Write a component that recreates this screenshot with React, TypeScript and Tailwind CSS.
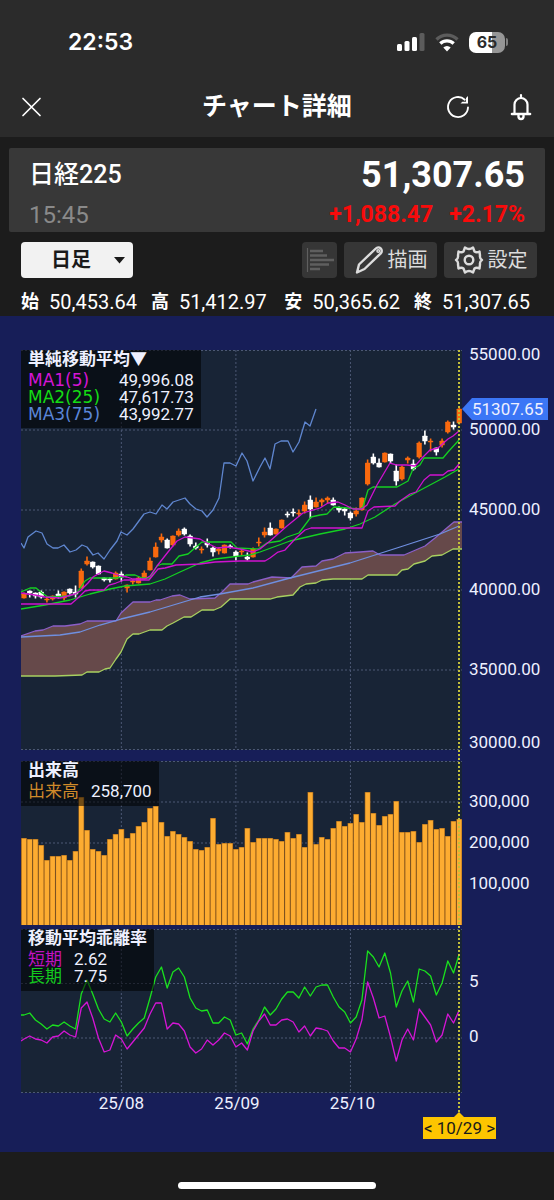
import { useState } from 'react'
import type { ReactNode } from 'react'

type Candle = [dir: 'u' | 'd', high: number, top: number, bottom: number, low: number]
type Point = [number, number]

// The chart canvas spans x 21..462, one trading day every 5.727 units
const dayX = (i: number) => 24 + i * 5.727
const MONTH_LINES = [17, 37, 57].map(dayX)

const CANDLES: Candle[] = [
  ['u', 593, 594, 598, 598], ['d', 591, 591, 593, 597], ['d', 593, 593, 596, 598], ['d', 591, 592, 597, 598],
  ['u', 597, 599, 600, 602], ['u', 596, 596, 599, 600], ['d', 591, 594, 596, 598], ['u', 592, 592, 598, 600],
  ['d', 589, 589, 593, 594], ['d', 586, 592, 594, 597], ['u', 569, 571, 588, 588], ['u', 557, 561, 564, 565],
  ['d', 562, 562, 567, 568], ['d', 566, 566, 574, 574], ['d', 578, 578, 580, 581], ['d', 578, 579, 580, 582],
  ['u', 572, 573, 579, 579], ['d', 572, 574, 577, 581], ['u', 585, 585, 588, 592], ['u', 580, 581, 582, 584],
  ['u', 577, 578, 583, 583], ['u', 571, 573, 579, 579], ['u', 558, 561, 570, 570], ['u', 543, 547, 557, 557],
  ['u', 534, 537, 540, 542], ['d', 539, 540, 548, 548], ['u', 536, 536, 545, 546], ['u', 529, 531, 535, 536],
  ['d', 528, 529, 534, 535], ['d', 535, 536, 544, 546], ['d', 543, 546, 548, 549], ['u', 547, 549, 550, 553],
  ['d', 539, 543, 545, 547], ['d', 547, 548, 552, 556], ['u', 548, 549, 551, 554], ['u', 545, 545, 553, 553],
  ['d', 545, 546, 547, 548], ['d', 551, 552, 556, 560], ['u', 550, 551, 552, 555], ['d', 553, 557, 559, 560],
  ['u', 548, 549, 557, 557], ['u', 538, 542, 543, 546], ['u', 528, 532, 535, 537], ['d', 523, 528, 535, 535],
  ['u', 529, 529, 534, 534], ['u', 520, 520, 528, 528], ['d', 512, 514, 515, 517], ['d', 509, 512, 513, 516],
  ['u', 510, 513, 514, 516], ['u', 502, 505, 511, 513], ['d', 496, 500, 509, 518], ['u', 498, 502, 507, 507],
  ['u', 499, 500, 502, 506], ['u', 497, 498, 500, 503], ['d', 498, 500, 505, 505], ['d', 507, 508, 510, 512],
  ['d', 508, 509, 511, 515], ['d', 512, 513, 518, 520], ['u', 508, 511, 514, 516], ['u', 498, 498, 510, 510],
  ['u', 460, 463, 484, 485], ['d', 454, 457, 463, 464], ['d', 459, 463, 467, 467], ['u', 453, 453, 462, 462],
  ['d', 454, 454, 461, 463], ['d', 465, 471, 481, 485], ['u', 466, 467, 479, 480], ['u', 457, 458, 460, 463],
  ['d', 460, 464, 469, 470], ['u', 442, 443, 457, 458], ['d', 431, 436, 441, 444], ['u', 439, 441, 442, 451],
  ['d', 448, 448, 452, 455], ['u', 439, 441, 445, 447], ['u', 421, 422, 432, 433], ['d', 422, 425, 427, 429],
  ['u', 408, 409, 423, 424],
]

const MA5: Point[] = [
  [21, 593], [35, 595], [45, 597], [60, 598], [75, 594], [80, 591], [88, 583], [93, 577], [98, 574], [104, 571],
  [112, 573], [121, 576], [127, 577], [133, 579], [145, 579], [150, 576], [157, 566], [168, 552], [177, 541],
  [185, 537], [193, 538], [200, 539], [207, 543], [217, 548], [228, 547], [240, 549], [253, 552], [260, 549],
  [270, 541], [287, 526], [303, 513], [320, 508], [328, 503], [338, 502], [345, 505], [353, 509], [362, 509],
  [367, 505], [377, 485], [390, 463], [397, 465], [407, 465], [415, 466], [423, 457], [430, 450], [438, 448],
  [448, 439], [453, 436], [459, 431],
]

const MA25: Point[] = [
  [21, 609], [45, 605], [70, 600], [90, 594], [110, 589], [125, 586], [150, 584], [165, 579], [180, 572],
  [200, 563], [215, 559], [240, 556], [250, 555], [260, 552], [290, 541], [320, 534], [345, 529], [360, 524],
  [375, 517], [395, 504], [415, 493], [430, 485], [445, 477], [459, 469],
]

const MA75: Point[] = [
  [21, 637], [60, 635], [80, 632], [100, 625], [121, 619], [150, 612], [180, 603], [200, 597], [220, 594],
  [253, 588], [290, 578], [350, 563], [400, 547], [440, 534], [459, 526],
]

const TENKAN: Point[] = [
  [21, 592], [30, 588], [36, 588], [42, 593], [48, 597], [70, 596], [77, 593], [85, 581], [90, 578], [116, 578],
  [122, 577], [126, 575], [135, 575], [142, 578], [150, 578], [157, 566], [162, 564], [172, 564], [179, 556],
  [188, 554], [196, 547], [202, 542], [231, 542], [237, 548], [258, 549], [267, 543], [280, 541], [287, 537],
  [299, 533], [311, 517], [320, 515], [327, 514], [334, 507], [360, 509], [363, 507], [368, 490], [373, 487],
  [397, 487], [408, 481], [413, 469], [420, 465], [424, 458], [443, 458], [448, 452], [459, 440],
]

const KIJUN: Point[] = [
  [21, 604], [71, 604], [78, 598], [85, 591], [90, 590], [104, 590], [109, 585], [116, 583], [124, 580],
  [149, 580], [158, 569], [165, 568], [176, 565], [200, 564], [215, 562], [240, 561], [265, 561], [270, 558],
  [278, 552], [285, 550], [296, 538], [305, 530], [311, 528], [362, 528], [368, 511], [374, 507], [395, 506],
  [400, 501], [410, 494], [416, 492], [424, 480], [430, 475], [443, 475], [448, 471], [454, 470], [459, 464],
]

const CHIKOU: Point[] = [
  [21, 543], [24, 548], [28, 537], [36, 531], [42, 533], [47, 544], [53, 548], [58, 548], [64, 545], [70, 552],
  [76, 550], [82, 545], [87, 547], [93, 555], [98, 553], [104, 559], [110, 550], [117, 541], [121, 532],
  [127, 535], [133, 529], [144, 514], [150, 512], [156, 514], [162, 505], [167, 509], [173, 502], [185, 498],
  [190, 504], [196, 509], [202, 511], [207, 517], [213, 510], [219, 498], [224, 463], [230, 463], [236, 466],
  [242, 453], [247, 461], [253, 481], [260, 467], [265, 458], [270, 469], [275, 444], [281, 441], [288, 441],
  [293, 452], [299, 442], [305, 422], [310, 426], [316, 409],
]

const SPAN_A: Point[] = [
  [21, 636], [35, 631], [43, 630], [53, 626], [65, 626], [80, 624], [87, 621], [116, 621], [121, 613],
  [133, 602], [150, 602], [156, 600], [160, 600], [172, 596], [180, 595], [190, 599], [215, 598], [222, 592],
  [230, 584], [248, 584], [253, 582], [272, 577], [291, 578], [302, 567], [316, 566], [322, 561], [333, 559],
  [345, 553], [360, 552], [373, 551], [380, 555], [404, 555], [425, 546], [435, 538], [448, 527], [454, 522],
  [462, 522],
]

const SPAN_B: Point[] = [
  [21, 676], [55, 676], [82, 675], [87, 672], [99, 672], [105, 669], [110, 668], [116, 659], [121, 652],
  [127, 639], [133, 634], [139, 634], [150, 630], [162, 630], [167, 626], [173, 623], [184, 617], [191, 617],
  [202, 610], [214, 610], [221, 607], [230, 599], [270, 599], [277, 597], [293, 595], [300, 587], [306, 584],
  [316, 583], [322, 580], [333, 579], [362, 579], [368, 575], [397, 575], [402, 570], [408, 569], [414, 564],
  [425, 561], [432, 556], [442, 555], [453, 549], [462, 549],
]

// Top edge of each volume bar, the base sits at 925
const VOLUME_TOPS = [
  838, 839, 839, 845, 860, 856, 856, 855, 860, 851, 797, 830, 849, 851, 855, 839, 834, 829, 838, 833, 826, 822,
  808, 806, 822, 836, 831, 834, 837, 841, 849, 850, 847, 818, 844, 843, 843, 849, 847, 828, 842, 838, 838, 838,
  839, 841, 832, 838, 834, 847, 792, 844, 837, 839, 828, 821, 826, 823, 814, 822, 792, 813, 825, 816, 814, 801,
  832, 832, 831, 842, 824, 820, 829, 828, 836, 821, 819,
]

const LONG_DEV = [
  1015, 1013, 1020, 1024, 1029, 1025, 1026, 1022, 1026, 1029, 994, 980, 994, 1009, 1019, 1022, 1013, 1022, 1036,
  1029, 1023, 1018, 998, 977, 967, 988, 972, 968, 977, 998, 1008, 1011, 1010, 1023, 1023, 1017, 1020, 1035, 1033,
  1044, 1029, 1020, 1007, 1015, 1009, 999, 992, 992, 998, 987, 996, 987, 985, 985, 997, 1007, 1012, 1023, 1017,
  1000, 951, 957, 967, 953, 973, 1007, 991, 981, 1002, 969, 971, 976, 995, 983, 961, 973, 954,
]

const SHORT_DEV = [
  1039, 1036, 1039, 1040, 1043, 1037, 1036, 1031, 1035, 1037, 1008, 1002, 1018, 1038, 1052, 1050, 1035, 1039,
  1049, 1042, 1035, 1028, 1014, 1003, 1003, 1029, 1023, 1024, 1031, 1047, 1053, 1049, 1040, 1045, 1040, 1033,
  1036, 1047, 1043, 1050, 1031, 1021, 1014, 1025, 1025, 1020, 1019, 1022, 1032, 1026, 1036, 1028, 1029, 1031,
  1041, 1048, 1048, 1052, 1039, 1020, 982, 998, 1018, 1016, 1037, 1061, 1040, 1029, 1040, 1009, 1017, 1025, 1042,
  1035, 1014, 1023, 1010,
]

const toPoints = (pts: Point[]) => pts.map((p) => p.join(',')).join(' ')
const seriesPoints = (ys: number[]) => ys.map((y, i) => `${dayX(i)},${y}`).join(' ')

function Line({ points, color }: { points: string; color: string }) {
  return (
    <polyline
      points={points}
      fill="none"
      stroke={color}
      strokeWidth="1.3"
      strokeLinejoin="round"
      vectorEffect="non-scaling-stroke"
    />
  )
}

interface PlotProps {
  top: number
  height: number
  gridY: number[]
  label: string
  className: string
  children: ReactNode
}

function Plot({ top, height, gridY, label, className, children }: PlotProps) {
  return (
    <svg
      viewBox={`21 ${top} 441 ${height}`}
      preserveAspectRatio="none"
      role="img"
      aria-label={label}
      className={`block w-full bg-[#182436] ${className}`}
    >
      <g stroke="#4c5874" strokeWidth="1" strokeDasharray="2 2">
        {gridY.map((y) => (
          <line key={y} x1="21" x2="462" y1={y} y2={y} />
        ))}
        {MONTH_LINES.map((x) => (
          <line key={x} x1={x} x2={x} y1={top} y2={top + height} />
        ))}
      </g>
      {children}
    </svg>
  )
}

function StatusBar() {
  return (
    <div className="flex h-[84px] items-center justify-between pl-[68px] pr-[46px] font-['Inter','Liberation_Sans',sans-serif]">
      <span className="text-[23px] font-semibold">22:53</span>
      <div className="flex items-center gap-2.5">
        <svg width="28" height="20" viewBox="0 0 28 20" aria-label="電波">
          <rect x="0" y="12" width="5" height="7" rx="1.5" fill="#fff" />
          <rect x="7.500" y="9" width="5" height="10" rx="1.500" fill="#fff" />
          <rect x="15" y="5" width="5" height="14" rx="1.500" fill="#fff" />
          <rect x="22.500" y="1" width="5" height="18" rx="1.500" fill="#5c5c5c" />
        </svg>
        <svg width="24" height="20" viewBox="0 0 24 20" aria-label="Wi-Fi">
          <g fill="none" strokeWidth="3.300">
            <path d="M1.500 7.500a15 15 0 0 1 21 0" stroke="#5c5c5c" />
            <path d="M5.300 11.500a9.700 9.700 0 0 1 13.400 0" stroke="#fff" />
          </g>
          <path d="M12 19.500l-3.700-3.900a5.300 5.300 0 0 1 7.400 0z" fill="#fff" />
        </svg>
        <div className="flex items-center gap-px">
          <div className="flex h-[21px] w-9 items-center justify-center rounded-[7px] bg-linear-to-r from-white from-65% to-[#969696] to-65% text-base font-bold text-[#2b2b2b]">
            65
          </div>
          <div className="h-2 w-0.5 rounded-r bg-[#808080]" />
        </div>
      </div>
    </div>
  )
}

function NavBar() {
  return (
    <div className="grid h-[53px] grid-cols-[1fr_auto_1fr] items-center px-5 pb-2">
      <button aria-label="閉じる" className="w-6">
        <svg width="24" height="24" viewBox="0 0 24 24" stroke="#fff" strokeWidth="1.700" strokeLinecap="round">
          <path d="M3 3.500l17 17M20 3.500l-17 17" />
        </svg>
      </button>
      <h1 className="text-[25px] leading-none font-bold">チャート詳細</h1>
      <div className="flex items-center justify-end gap-[38px] pr-px">
        <button aria-label="更新">
          <svg width="26" height="26" viewBox="0 0 26 26" fill="none" stroke="#fff" strokeWidth="1.900">
            <path d="M23 13.500a10 10 0 1 1-3.200-7.800" strokeLinecap="round" />
            <path d="M15.500 9.500h7.500v-7.500l-2 2v3.700h-3.700z" fill="#fff" stroke="none" />
          </svg>
        </button>
        <button aria-label="通知">
          <svg width="24" height="30" viewBox="0 0 24 30" fill="none" stroke="#fff" strokeWidth="2.200" strokeLinecap="round">
            <path d="M5.500 21v-8.500a6.500 6.500 0 0 1 13 0v8.500" />
            <path d="M3 22h18" strokeWidth="2.600" />
            <path d="M12 3v3" />
            <path d="M9.500 23.500v1a2.500 2.500 0 0 0 5 0v-1" strokeWidth="2.400" />
          </svg>
        </button>
      </div>
    </div>
  )
}

function QuoteCard() {
  return (
    <section className="mx-[9px] mt-[11px] flex h-[84px] items-start justify-between rounded-xs bg-[#383838] px-5">
      <div className="flex flex-col gap-3.5 pt-[13px]">
        <h2 className="text-[25px] leading-7 font-medium">日経225</h2>
        <time className="text-2xl leading-6 text-[#8a8a8a]">15:45</time>
      </div>
      <div className="flex flex-col items-end gap-2.5 pt-[9px] font-bold">
        <span className="text-[36px] leading-9">51,307.65</span>
        <span className="flex gap-4 text-[23px] leading-6 text-[#f80b0b]">
          <span>+1,088.47</span>
          <span>+2.17%</span>
        </span>
      </div>
    </section>
  )
}

function Toolbar() {
  const [period, setPeriod] = useState('日足')

  return (
    <div className="mt-[10px] flex items-center justify-between pl-[21px] pr-[17px]">
      <div className="relative">
        <select
          aria-label="足種"
          value={period}
          onChange={(e) => setPeriod(e.target.value)}
          className="h-9 w-28 appearance-none rounded-sm bg-[#f2f2f2] pl-[30px] text-xl font-bold text-[#1a1a1a]"
        >
          <option>日足</option>
          <option>週足</option>
          <option>月足</option>
        </select>
        <svg className="pointer-events-none absolute top-[15px] right-2" width="11" height="7" viewBox="0 0 11 7">
          <path d="M0 0h11L5.500 6.500z" fill="#1a1a1a" />
        </svg>
      </div>
      <div className="flex gap-[7px] text-xl text-[#dcdcdc]">
        <button aria-label="価格帯別出来高" className="flex h-9 w-[35px] items-center justify-center rounded-sm bg-[#363636]">
          <svg width="28" height="26" viewBox="0 0 28 26" stroke="#5f5f5f" strokeWidth="2.600">
            <path d="M1.500 1v24" strokeWidth="1.200" />
            <path d="M4 4h13M4 8.500h17M4 13h24M4 17.500h19M4 22h10" />
          </svg>
        </button>
        <button className="flex h-9 w-[93px] items-center justify-center gap-1 rounded-sm bg-[#363636]">
          <svg width="30" height="30" viewBox="0 0 30 30" fill="none" stroke="#dcdcdc" strokeWidth="2.400" strokeLinejoin="round">
            <path d="M3 27.500l2-8L21.800 3.500a3.400 3.400 0 0 1 5 4.800L10.500 24z" />
            <circle cx="24.300" cy="6" r="1.300" strokeWidth="1.600" />
          </svg>
          描画
        </button>
        <button className="flex h-9 w-[93px] items-center justify-center gap-1 rounded-sm bg-[#363636]">
          <svg width="30" height="30" viewBox="0 0 30 30" fill="none" stroke="#dcdcdc" strokeWidth="2.400" strokeLinejoin="round">
            <path d="M11 2.500q4 3 8 0l1.500 4q2 1.500 5 0l.5 4q-.5 3 2 4.500-2.500 1.500-2 4.500l-.5 4q-3-1.500-5 0l-1.500 4q-4-3-8 0l-1.500-4q-2-1.500-5 0L4 19.500q.5-3-2-4.500 2.500-1.500 2-4.500l.5-4q3 1.500 5 0z" />
            <circle cx="15" cy="15" r="4.300" />
          </svg>
          設定
        </button>
      </div>
    </div>
  )
}

function Ohlc() {
  const groups = [
    [['始', '50,453.64'], ['高', '51,412.97']],
    [['安', '50,365.62'], ['終', '51,307.65']],
  ]
  return (
    <div className="mt-2.5 flex h-[27px] items-center justify-between pr-6 pl-[21px] text-xl leading-7">
      {groups.map((group, i) => (
        <dl key={i} className="flex gap-3.5">
          {group.map(([name, value]) => (
            <div key={name} className="flex gap-2.5">
              <dt className="text-lg leading-7 font-bold">{name}</dt>
              <dd>{value}</dd>
            </div>
          ))}
        </dl>
      ))}
    </div>
  )
}

function PricePanel() {
  return (
    <div className="grid grid-cols-[1fr_92px]">
      <div className="relative">
        <Plot top={350} height={400} gridY={[350.5, 430, 510, 590, 670, 749.5]} label="日経225 日足" className="h-[400px]">
          <polygon points={`${toPoints(SPAN_A)} ${toPoints([...SPAN_B].reverse())}`} fill="#66494a" />
          <Line points={toPoints(SPAN_A)} color="#8b5fc8" />
          <Line points={toPoints(SPAN_B)} color="#a8d060" />
          <Line points={toPoints(MA75)} color="#6f8fe0" />
          <Line points={toPoints(CHIKOU)} color="#5f86cf" />
          {CANDLES.map(([dir, high, top, bottom, low], i) => (
            <g key={i} fill={dir === 'u' ? '#f9690e' : '#fff'}>
              <rect x={dayX(i) - 0.8} y={high - 0.5} width="1.600" height={low - high + 1} />
              <rect x={dayX(i) - 2.6} y={top - 0.3} width="5.200" height={bottom - top + 0.6} rx="0.500" />
            </g>
          ))}
          <Line points={toPoints(TENKAN)} color="#14d022" />
          <Line points={toPoints(MA25)} color="#14d022" />
          <Line points={toPoints(KIJUN)} color="#cf12cf" />
          <Line points={toPoints(MA5)} color="#cf12cf" />
        </Plot>
        <div className="absolute top-0 left-0 bg-black/55 px-[7px] pb-[5px] text-[17px]">
          <div className="pb-[3px] leading-[19px] font-bold">単純移動平均▼</div>
          <table className="leading-[17px]">
            <tbody>
              <tr>
                <th scope="row" className="w-[91px] text-left font-['DejaVu_Sans',sans-serif] font-normal text-[#d615d6]">MA1(5)</th>
                <td>49,996.08</td>
              </tr>
              <tr>
                <th scope="row" className="text-left font-['DejaVu_Sans',sans-serif] font-normal text-[#14dc14]">MA2(25)</th>
                <td>47,617.73</td>
              </tr>
              <tr>
                <th scope="row" className="text-left font-['DejaVu_Sans',sans-serif] font-normal text-[#5b86d8]">MA3(75)</th>
                <td>43,992.77</td>
              </tr>
            </tbody>
          </table>
        </div>
      </div>
      <div className="relative pl-[7px] text-[17px] leading-4">
        <div className="-mt-1 flex h-[43px] items-start">55000.00</div>
        {['50000.00', '45000.00', '40000.00', '35000.00'].map((p) => (
          <div key={p} className="flex h-20 items-center">{p}</div>
        ))}
        <div className="flex h-[41px] items-end">30000.00</div>
        <div className="absolute top-12 left-0 flex h-[22px]">
          <svg width="10" height="22" viewBox="0 0 10 22">
            <path d="M10 0v22L0 11z" fill="#3b76f6" />
          </svg>
          <span className="bg-[#3b76f6] pr-[5px] leading-[22px]">51307.65</span>
        </div>
      </div>
    </div>
  )
}

function VolumePanel() {
  return (
    <div className="mt-[11px] grid grid-cols-[1fr_92px]">
      <div className="relative">
        <Plot top={761} height={164} gridY={[761.5, 802, 843, 884]} label="出来高" className="h-[164px]">
          {VOLUME_TOPS.map((y, i) => (
            <g key={i}>
              <rect x={dayX(i) - 2.9} y={y} width="5.800" height={925 - y} fill="#99601c" />
              <rect x={dayX(i) - 2.3} y={y + 0.5} width="4.600" height={925 - y} fill="#fdac31" />
            </g>
          ))}
        </Plot>
        <div className="absolute top-0 left-0 bg-black/55 px-[7px] pb-[5px] text-[17px] leading-5">
          <div className="pb-0.5 leading-[18px] font-bold">出来高</div>
          <div className="flex gap-3">
            <span className="text-[#d08a2a]">出来高</span>
            <span>258,700</span>
          </div>
        </div>
      </div>
      <div className="flex flex-col pt-5 pl-[7px] text-[17px]">
        {['300,000', '200,000', '100,000'].map((v) => (
          <div key={v} className="flex h-[41px] items-center">{v}</div>
        ))}
      </div>
    </div>
  )
}

function DeviationPanel() {
  return (
    <div className="mt-1 grid grid-cols-[1fr_92px]">
      <div className="relative">
        <Plot top={929} height={164} gridY={[929.5, 983.5, 1038, 1092.5]} label="移動平均乖離率" className="h-[164px]">
          <Line points={`21,1015 ${seriesPoints(LONG_DEV)}`} color="#1ae01e" />
          <Line points={`21,1041 ${seriesPoints(SHORT_DEV)}`} color="#d615d6" />
        </Plot>
        <div className="absolute top-0 left-0 bg-black/55 px-[7px] pb-1.5 text-[17px] leading-[17px]">
          <div className="pb-1 leading-[18px] font-bold">移動平均乖離率</div>
          <div className="flex gap-3">
            <span className="text-[#c012c0]">短期</span>
            <span>2.62</span>
          </div>
          <div className="flex gap-3">
            <span className="text-[#14c81e]">長期</span>
            <span>7.75</span>
          </div>
        </div>
      </div>
      <div className="flex flex-col pt-[26px] pl-[7px] text-[17px]">
        <div className="flex h-[54px] items-center">5</div>
        <div className="flex h-14 items-center">0</div>
      </div>
    </div>
  )
}

function ChartArea() {
  return (
    <section className="mt-px bg-[#171e58] pt-[34px] pb-[13px] pl-[21px] text-[#eef0ff]">
      <div className="relative">
        <PricePanel />
        <VolumePanel />
        <DeviationPanel />
        {/* Month labels sit under their grid lines */}
        <div className="mr-[92px] flex h-[19px] pl-[8%] text-[17px] leading-5">
          {['25/08', '25/09', '25/10'].map((m) => (
            <span key={m} className="w-[29%] text-center">{m}</span>
          ))}
        </div>
        <div className="absolute top-0 right-[94px] bottom-0 border-l-2 border-dotted border-[#c4c03a]" />
      </div>
      <div className="mr-[58px] flex flex-col items-end">
        <svg className="mr-8 block" width="10" height="5" viewBox="0 0 10 5">
          <path d="M5 0l5 5H0z" fill="#fdc500" />
        </svg>
        <button className="h-[22px] w-[73px] bg-[#fdc500] text-center text-[17px] leading-[22px] whitespace-nowrap text-[#1a1a1a]">
          &lt; 10/29 &gt;
        </button>
      </div>
    </section>
  )
}

export default function App() {
  return (
    <main className="min-h-screen bg-[#1c1c1c] font-['Roboto','Noto_Sans_CJK_JP',sans-serif] text-white">
      <header className="bg-[#2b2b2b]">
        <StatusBar />
        <NavBar />
      </header>
      <QuoteCard />
      <Toolbar />
      <Ohlc />
      <ChartArea />
      <footer className="flex justify-center pt-[30px] pb-2.5">
        <div className="h-[7px] w-[198px] rounded-full bg-white" />
      </footer>
    </main>
  )
}
